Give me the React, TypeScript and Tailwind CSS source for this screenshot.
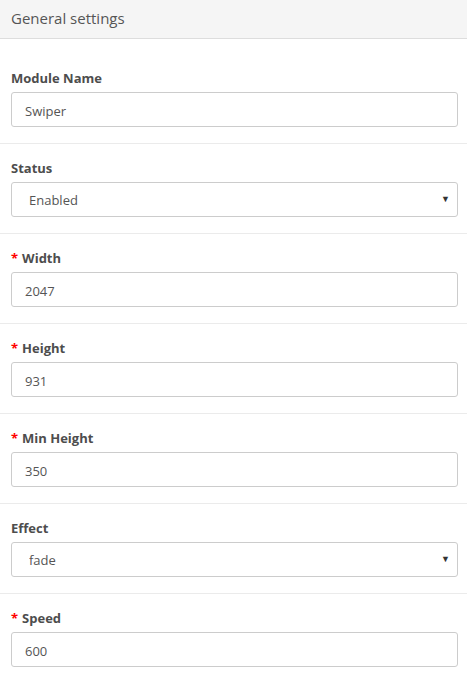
import { useState } from "react";

type Field = {
  label: string;
  value: string;
  required?: boolean;
  options?: string[];
};

const fields: Field[] = [
  { label: "Module Name", value: "Swiper" },
  { label: "Status", value: "Enabled", options: ["Enabled", "Disabled"] },
  { label: "Width", value: "2047", required: true },
  { label: "Height", value: "931", required: true },
  { label: "Min Height", value: "350", required: true },
  { label: "Effect", value: "fade", options: ["fade", "slide", "cube", "coverflow", "flip"] },
  { label: "Speed", value: "600", required: true },
];

function FormRow({ field, first }: { field: Field; first: boolean }) {
  const [val, setVal] = useState(field.value);

  return (
    <div className={`pl-[11px] pr-[9px] pt-[14px] pb-[16px] ${first ? "" : "border-t border-[#ebebeb]"}`}>
      <label className="block h-[20px] mb-[4px] text-[13px] leading-[20px] font-bold text-[#4d4d4d]">
        {field.required && <span className="text-[#ff0000] mr-[4px]">*</span>}
        {field.label}
      </label>
      {field.options ? (
        <div className="relative">
          <select
            value={val}
            onChange={(e) => setVal(e.target.value)}
            className="appearance-none w-full h-[35px] pl-[17px] pr-8 pt-[3px] bg-white border border-[#cccccc] rounded-[3px] text-[13px] text-[#555] outline-none"
          >
            {field.options.map((o) => (
              <option key={o} value={o}>{o}</option>
            ))}
          </select>
          <span className="pointer-events-none absolute right-[8px] top-[7px] text-[9px] leading-[20px] text-[#333]">▼</span>
        </div>
      ) : (
        <input
          value={val}
          onChange={(e) => setVal(e.target.value)}
          className="block w-full h-[35px] px-[13px] pt-[2px] bg-white border border-[#cccccc] rounded-[3px] text-[13px] text-[#555] outline-none"
        />
      )}
    </div>
  );
}

export default function App() {
  return (
    <div className="w-[467px] min-h-[676px] bg-white font-['Open_Sans',sans-serif]">
      {/* Panel heading */}
      <div className="h-[39px] bg-[#f5f5f5] border-b border-[#dddddd] pl-[11px] flex items-center">
        <h3 className="text-[15px] font-normal text-[#555] -mt-px">General settings</h3>
      </div>

      <div className="pt-[15px]">
        {fields.map((f, i) => (
          <FormRow key={f.label} field={f} first={i === 0} />
        ))}
      </div>
    </div>
  );
}
